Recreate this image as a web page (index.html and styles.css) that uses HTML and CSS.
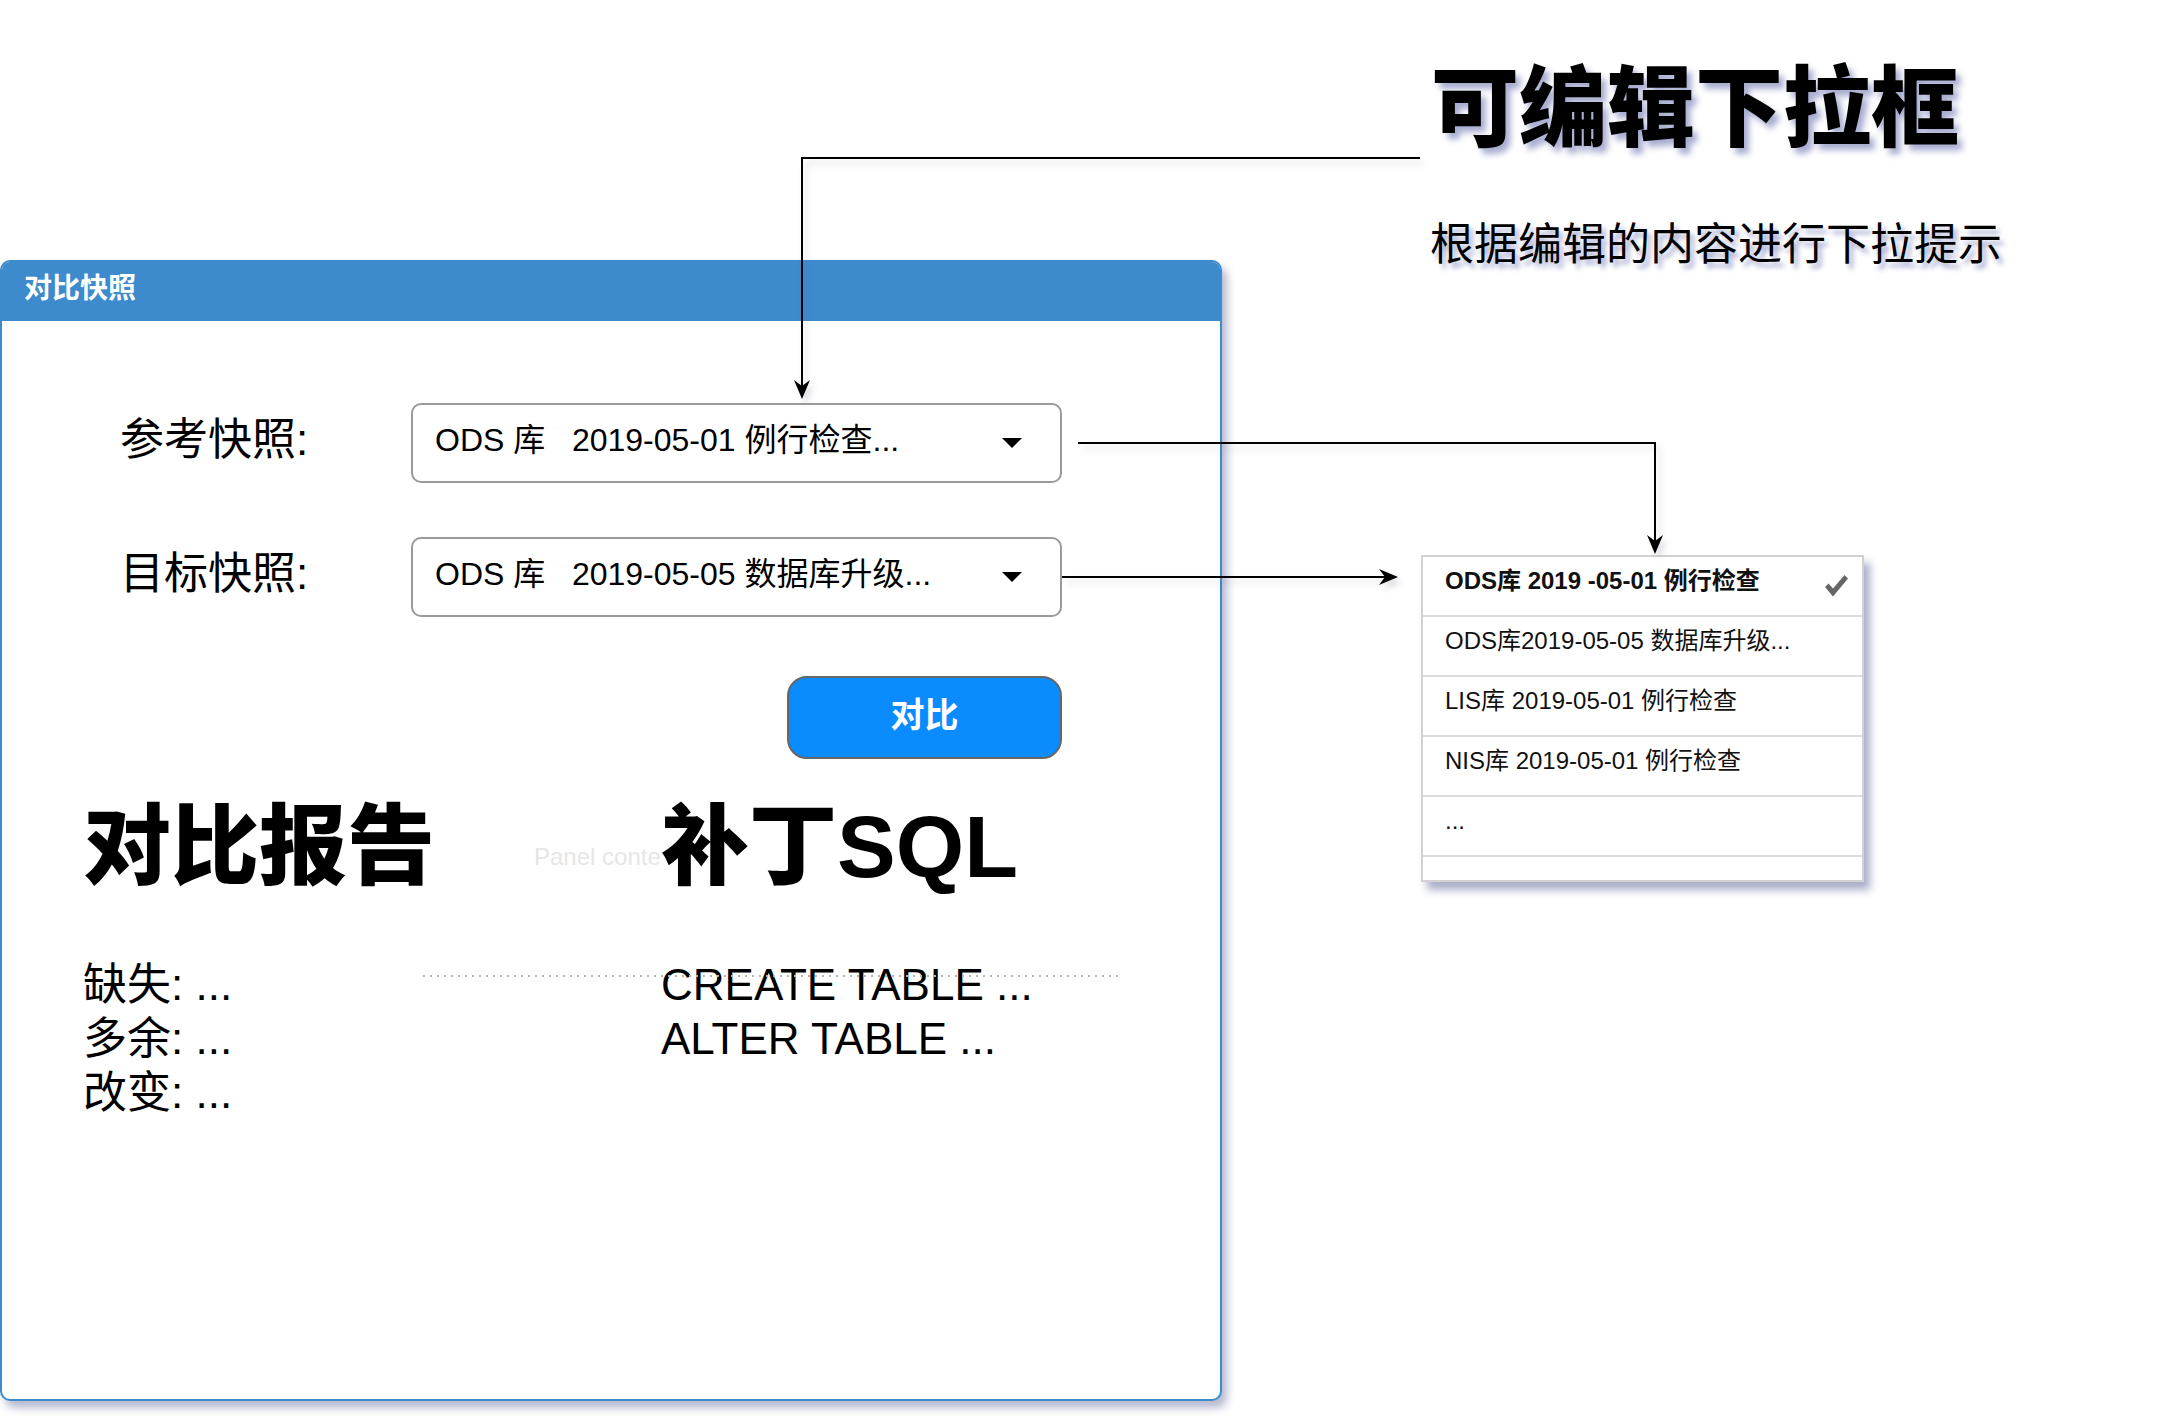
FILE: index.html
```html
<!DOCTYPE html>
<html lang="zh-CN">
<head>
<meta charset="utf-8">
<title>对比快照</title>
<link rel="stylesheet" href="styles.css">
</head>
<body>
<div class="canvas">
  <section class="panel">
    <header class="panel-head">对比快照</header>
    <div class="panel-body">
      <div class="field field-first">
        <label class="field-label">参考快照:</label>
        <div class="combo"><span class="combo-text">ODS 库   2019-05-01 例行检查...</span><span class="caret"></span></div>
      </div>
      <div class="field field-second">
        <label class="field-label">目标快照:</label>
        <div class="combo"><span class="combo-text">ODS 库   2019-05-05 数据库升级...</span><span class="caret"></span></div>
      </div>
      <div class="actions"><button class="btn" type="button">对比</button></div>
      <div class="results">
        <h2 class="big">对比报告</h2>
        <span class="ghost">Panel conte</span>
        <h2 class="big">补丁SQL</h2>
        <div class="lines lines-report">
          <div>缺失: ...</div>
          <div>多余: ...</div>
          <div>改变: ...</div>
        </div>
        <div class="lines lines-sql">
          <div>CREATE TABLE ...</div>
          <div>ALTER TABLE ...</div>
        </div>
      </div>
    </div>
  </section>

  <aside class="side">
    <h1 class="note-title">可编辑下拉框</h1>
    <p class="note-sub">根据编辑的内容进行下拉提示</p>
    <ul class="menu">
      <li class="menu-item menu-item-selected"><span>ODS库 2019 -05-01 例行检查</span>
        <svg class="check" width="23" height="22" viewBox="0 0 23 22"><polygon points="0,12 3.5,8.5 8,13.5 19.5,0 23,3.5 8,21.5" fill="#666"/></svg>
      </li>
      <li class="menu-item"><span>ODS库2019-05-05 数据库升级...</span></li>
      <li class="menu-item"><span>LIS库 2019-05-01 例行检查</span></li>
      <li class="menu-item"><span>NIS库 2019-05-01 例行检查</span></li>
      <li class="menu-item"><span>...</span></li>
      <li class="menu-item menu-item-last"></li>
    </ul>
  </aside>

  <svg class="wires" width="2162" height="1424" viewBox="0 0 2162 1424">
    <path class="dots" d="M423 976 H1118"/>
    <g class="links">
      <path class="wire" d="M1420 158 H802 V388"/>
      <polygon class="head" points="802,399 794,380 802,386 810,380"/>
      <path class="wire" d="M1078 443 H1655 V543"/>
      <polygon class="head" points="1655,554 1647,535 1655,541 1663,535"/>
      <path class="wire" d="M1062 577 H1386"/>
      <polygon class="head" points="1398,577 1379,569 1385,577 1379,585"/>
    </g>
  </svg>
</div>
</body>
</html>
```

FILE: styles.css
```css
html, body {
  margin: 0;
  padding: 0;
  background: #ffffff;
}

body {
  font-family: "Liberation Sans", "Noto Sans CJK SC", sans-serif;
  color: #000;
}

.canvas {
  position: relative;
  width: 2162px;
  height: 1424px;
  display: flex;
  align-items: flex-start;
  overflow: hidden;
}

/* ---------- panel ---------- */
.panel {
  flex: none;
  box-sizing: border-box;
  width: 1222px;
  height: 1141px;
  margin-top: 260px;
  border: 2px solid #3d8bcd;
  border-radius: 10px;
  background: #fff;
  box-shadow: 5px 7px 8px rgba(45, 55, 120, 0.35);
  overflow: hidden;
}

.panel-head {
  box-sizing: border-box;
  height: 59px;
  padding: 13px 0 0 22px;
  background: #3d8bcd;
  color: #fff;
  font-size: 28px;
  line-height: 28px;
  font-weight: 700;
}

.panel-body {
  display: flex;
  flex-direction: column;
}

.field {
  display: flex;
  align-items: center;
  height: 80px;
  padding-left: 118px;
}

.field-first { margin-top: 82px; }
.field-second { margin-top: 54px; }

.field-label {
  width: 291px;
  font-size: 44px;
  line-height: 44px;
  padding-bottom: 6px;
}

.combo {
  box-sizing: border-box;
  width: 651px;
  height: 80px;
  border: 2px solid #9a9a9a;
  border-radius: 10px;
  display: flex;
  align-items: center;
  justify-content: space-between;
  padding: 0 38px 0 22px;
}

.combo-text {
  white-space: pre;
  font-size: 32px;
  line-height: 32px;
  padding-bottom: 6px;
}

.caret {
  width: 0;
  height: 0;
  border-left: 10.5px solid transparent;
  border-right: 10.5px solid transparent;
  border-top: 10px solid #000;
}

.actions {
  margin-top: 59px;
  padding-left: 785px;
}

.btn {
  box-sizing: border-box;
  width: 275px;
  height: 83px;
  padding: 0 0 6px 0;
  border: 2px solid #666;
  border-radius: 20px;
  background: #0a8cff;
  color: #fff;
  font-family: "Liberation Sans", "Noto Sans CJK SC", sans-serif;
  font-size: 34px;
  line-height: 34px;
  font-weight: 700;
}

.results {
  margin-top: 44px;
  padding-left: 81px;
  display: grid;
  grid-template-columns: 451px 127px 1fr;
  row-gap: 67px;
  align-items: start;
}

.big {
  margin: 0;
  font-size: 88px;
  line-height: 88px;
  font-weight: 900;
  white-space: nowrap;
}

.ghost {
  margin-top: 42px;
  font-size: 24px;
  line-height: 24px;
  color: #e6e6e6;
  white-space: nowrap;
}

.lines {
  font-size: 44px;
  line-height: 54px;
  white-space: nowrap;
}

.lines-report { grid-column: 1 / 3; }
.lines-sql { grid-column: 3; }

/* ---------- side note ---------- */
.side {
  flex: none;
  margin-left: 199px;
  display: flex;
  flex-direction: column;
}

.note-title {
  margin: 65px 0 0 10px;
  font-size: 88px;
  line-height: 88px;
  font-weight: 900;
  white-space: nowrap;
  text-shadow: 5px 6px 6px rgba(60, 70, 150, 0.45);
}

.note-sub {
  margin: 70px 0 0 9px;
  font-size: 44px;
  line-height: 44px;
  font-weight: 400;
  white-space: nowrap;
  text-shadow: 4px 5px 5px rgba(60, 70, 150, 0.45);
}

.menu {
  box-sizing: border-box;
  width: 443px;
  margin: 288px 0 0 0;
  padding: 0;
  list-style: none;
  border: 2px solid #d2d2d2;
  background: #fff;
  box-shadow: 6px 8px 8px rgba(45, 55, 120, 0.4);
}

.menu-item {
  box-sizing: border-box;
  height: 60px;
  padding: 6px 14px 0 22px;
  border-bottom: 2px solid #dcdcdc;
  display: flex;
  justify-content: space-between;
  align-items: flex-start;
  font-size: 24px;
  line-height: 36px;
  color: #111;
  white-space: nowrap;
}

.menu-item-selected {
  font-weight: 700;
}

.menu-item-last {
  height: 23px;
  border-bottom: none;
}

.check {
  margin-top: 12px;
  flex: none;
}

/* ---------- connectors ---------- */
.wires {
  position: absolute;
  left: 0;
  top: 0;
  pointer-events: none;
}

.links {
  filter: drop-shadow(4px 5px 3px rgba(60, 60, 100, 0.18));
}

.wire {
  fill: none;
  stroke: #000;
  stroke-width: 2;
}

.head {
  fill: #000;
}

.dots {
  fill: none;
  stroke: #b5b5b5;
  stroke-width: 2;
  stroke-dasharray: 2 5;
}
```
